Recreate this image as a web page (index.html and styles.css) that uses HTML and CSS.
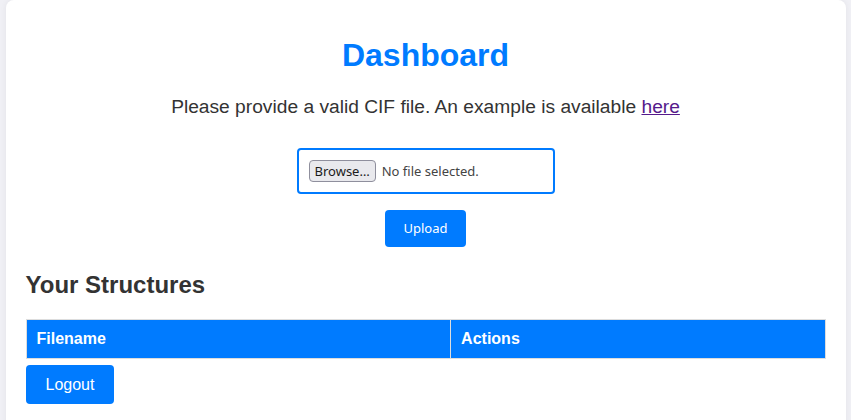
FILE: index.html
```html
<!DOCTYPE html>
<html>
<head>
<meta charset="utf-8">
<link rel="stylesheet" href="styles.css">
</head>
<body>
<div class="container">
  <h1 class="title">Dashboard</h1>
  <p class="intro">Please provide a valid CIF file. An example is available <a class="link" href="#">here</a></p>
  <form class="upload-form">
    <div class="file-box">
      <span class="browse">Browse…</span>
      <span class="file-status">No file selected.</span>
    </div>
    <div class="upload-row"><span class="btn-upload">Upload</span></div>
  </form>
  <h2 class="section-title">Your Structures</h2>
  <table class="structures">
    <thead>
      <tr><th>Filename</th><th>Actions</th></tr>
    </thead>
  </table>
  <span class="btn-logout">Logout</span>
</div>
</body>
</html>
```

FILE: styles.css
```css
html, body {
  margin: 0;
  padding: 0;
}
body {
  background: #f0f0f5;
  font-family: "Liberation Sans", Arial, sans-serif;
  color: #333;
  height: 420px;
  overflow: hidden;
}
.container {
  max-width: 800px;
  margin: 0 auto;
  padding: 16px 20px 20px;
  background: #fff;
  border-radius: 8px;
  box-shadow: 0 0 6px rgba(0, 0, 0, 0.06);
  min-height: 600px;
}
.title {
  text-align: center;
  color: #007bff;
  font-size: 32px;
  font-weight: bold;
  margin: 21.44px 0;
}
.intro {
  text-align: center;
  font-size: 19.2px;
  margin: 19.2px 0;
}
.link {
  color: #551a8b;
}
.upload-form {
  margin: 30px 0 0;
}
.file-box {
  width: 234px;
  height: 22px;
  margin: 0 auto;
  border: 2px solid #007bff;
  border-radius: 4px;
  padding: 10px;
  display: flex;
  align-items: center;
  gap: 6px;
  font-family: "Noto Sans", sans-serif;
  font-size: 13px;
  color: #333;
}
.browse {
  background: #e9e9ed;
  border: 1px solid #8f8f9d;
  border-radius: 4px;
  padding: 1px 5px;
  color: #1b1b1b;
  line-height: 18px;
}
.file-status {
  color: #444;
}
.upload-row {
  display: flex;
  justify-content: center;
  margin-top: 16px;
}
.btn-upload {
  background: #007bff;
  color: #fff;
  border-radius: 4px;
  padding: 10px 18.5px;
  font-family: "Noto Sans", sans-serif;
  font-size: 13px;
  line-height: 17.5px;
}
.section-title {
  font-size: 24px;
  font-weight: bold;
  margin: 24px 0 20px;
}
.structures {
  width: 100%;
  border-collapse: collapse;
  margin-bottom: 6px;
}
.structures th {
  background: #007bff;
  color: #fff;
  text-align: left;
  font-size: 16px;
  font-weight: bold;
  padding: 10px;
  border: 1px solid #ddd;
}
.btn-logout {
  display: inline-block;
  background: #007bff;
  color: #fff;
  border-radius: 4px;
  padding: 10px 20px;
  font-size: 16px;
  line-height: 19px;
}
```
